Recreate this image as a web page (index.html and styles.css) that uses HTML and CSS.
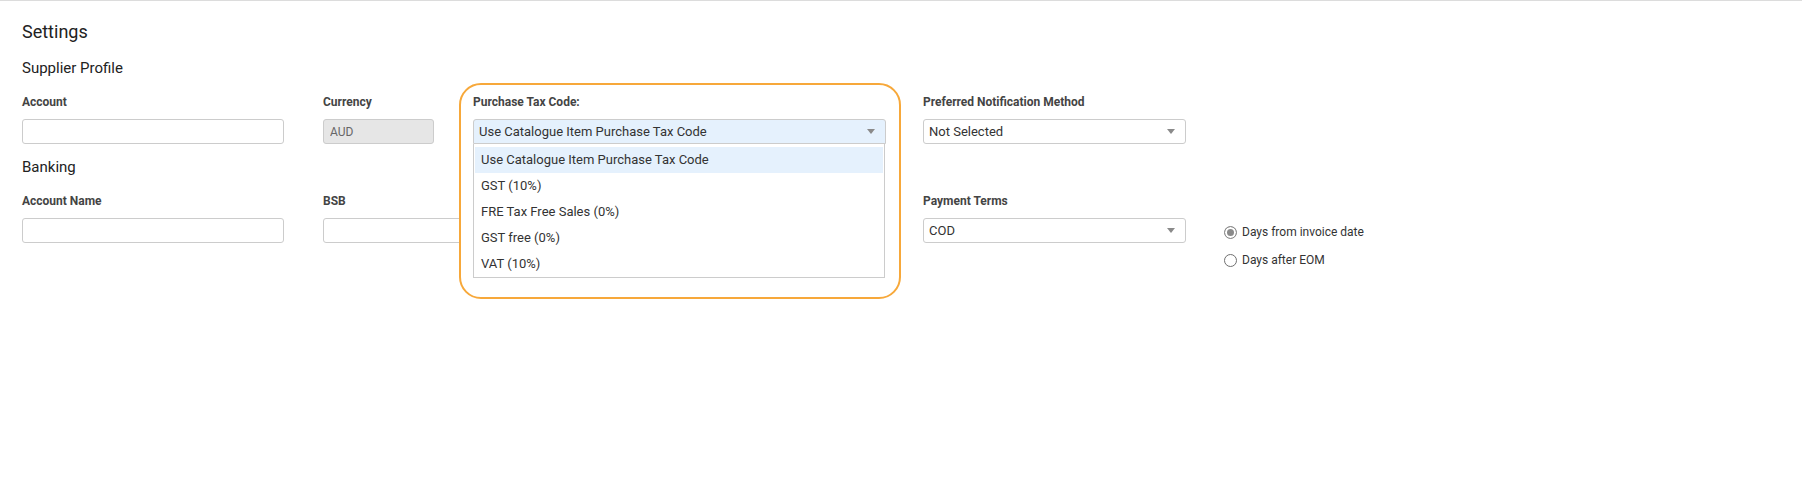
FILE: index.html
```html
<!DOCTYPE html>
<html lang="en">
<head>
    <meta charset="UTF-8">
    <meta name="viewport" content="width=device-width, initial-scale=1.0">
    <title>Settings</title>
    <link rel="stylesheet" href="styles.css">
</head>
<body>
    <div class="settings">
        <h1 class="page-title">Settings</h1>

        <h2 class="section-title first">Supplier Profile</h2>
        <div class="field-row">
            <div class="field">
                <label class="field-label">Account</label>
                <input type="text" class="text-input w-account">
            </div>
            <div class="field">
                <label class="field-label">Currency</label>
                <input type="text" class="text-input w-currency disabled" value="AUD" disabled>
            </div>
            <div class="field field-tax">
                <div class="highlight"></div>
                <label class="field-label">Purchase Tax Code:</label>
                <div class="select-wrap">
                    <div class="select-box open w-tax">
                        <span>Use Catalogue Item Purchase Tax Code</span>
                        <span class="arrow"></span>
                    </div>
                    <ul class="dropdown">
                        <li class="selected">Use Catalogue Item Purchase Tax Code</li>
                        <li>GST (10%)</li>
                        <li>FRE Tax Free Sales (0%)</li>
                        <li>GST free (0%)</li>
                        <li>VAT (10%)</li>
                    </ul>
                </div>
            </div>
            <div class="field">
                <label class="field-label">Preferred Notification Method</label>
                <div class="select-box w-notify">
                    <span>Not Selected</span>
                    <span class="arrow"></span>
                </div>
            </div>
        </div>

        <h2 class="section-title">Banking</h2>
        <div class="field-row">
            <div class="field">
                <label class="field-label">Account Name</label>
                <input type="text" class="text-input w-account">
            </div>
            <div class="field">
                <label class="field-label">BSB</label>
                <input type="text" class="text-input w-bsb">
            </div>
            <div class="field"></div>
            <div class="field">
                <label class="field-label">Payment Terms</label>
                <div class="select-box w-notify">
                    <span>COD</span>
                    <span class="arrow"></span>
                </div>
            </div>
            <div class="radio-group">
                <div class="radio-line"><span class="radio checked"></span>Days from invoice date</div>
                <div class="radio-line"><span class="radio"></span>Days after EOM</div>
            </div>
        </div>
    </div>
</body>
</html>
```

FILE: styles.css
```css
body {
    margin: 0;
    font-family: Roboto, "Liberation Sans", Arial, sans-serif;
    color: #222;
    background: #fff;
    border-top: 1px solid #dcdcdc;
    height: 497px;
    overflow: hidden;
}
.settings {
    padding: 0 22px;
}
.page-title {
    font-size: 18px;
    line-height: 21px;
    font-weight: 400;
    margin: 20px 0 0;
}
.section-title {
    font-size: 15px;
    line-height: 18px;
    font-weight: 400;
    margin: 14px 0 0;
}
.section-title.first {
    margin-top: 17px;
}
.field-row {
    display: grid;
    grid-template-columns: 301px 150px 450px 301px auto;
    margin-top: 18px;
}
.field {
    display: flex;
    flex-direction: column;
}
.field-label {
    font-size: 12px;
    line-height: 14px;
    font-weight: 700;
    color: #444;
    margin-bottom: 10px;
}
.text-input {
    box-sizing: border-box;
    height: 25px;
    border: 1px solid #ccc;
    border-radius: 3px;
    padding: 0 6px;
    font-family: inherit;
    font-size: 12px;
    color: #333;
    background: #fff;
    margin: 0;
}
.text-input.disabled {
    background: #e6e6e6;
    color: #666;
}
.w-account { width: 262px; }
.w-currency { width: 111px; }
.w-bsb { width: 563px; }
.w-tax { width: 413px; }
.w-notify { width: 263px; }

.select-box {
    box-sizing: border-box;
    height: 25px;
    border: 1px solid #ccc;
    border-radius: 3px;
    padding: 0 10px 0 5px;
    display: flex;
    align-items: center;
    justify-content: space-between;
    font-size: 13px;
    color: #333;
    background: #fff;
}
.select-box.open {
    background: #e5f1fd;
    border-radius: 3px 3px 0 0;
}
.arrow {
    width: 0;
    height: 0;
    border-left: 4px solid transparent;
    border-right: 4px solid transparent;
    border-top: 5px solid #8a8a8a;
}

.field-tax {
    position: relative;
    z-index: 5;
    width: 413px;
}
.highlight {
    position: absolute;
    left: -14px;
    right: -15px;
    top: -12px;
    height: 216px;
    box-sizing: border-box;
    border: 2px solid #f7a83a;
    border-radius: 22px;
    background: #fff;
    z-index: -1;
}
.select-wrap {
    position: relative;
}
.dropdown {
    position: absolute;
    top: 100%;
    left: 0;
    width: 412px;
    box-sizing: border-box;
    margin: 0;
    padding: 3px 1px 0;
    list-style: none;
    border: 1px solid #ccc;
    border-top: none;
    background: #fff;
}
.dropdown li {
    height: 26px;
    line-height: 26px;
    padding-left: 6px;
    font-size: 13px;
    color: #333;
}
.dropdown li.selected {
    background: #e5f1fd;
}

.radio-group {
    margin-top: 24px;
}
.radio-line {
    display: flex;
    align-items: center;
    height: 28px;
    font-size: 12px;
    color: #333;
}
.radio {
    box-sizing: border-box;
    width: 13px;
    height: 13px;
    border: 1px solid #6f6f6f;
    border-radius: 50%;
    margin-right: 5px;
    background: #fff;
}
.radio.checked {
    border-color: #8a8a8a;
    background: #8a8a8a;
    box-shadow: inset 0 0 0 2px #fff;
}
```
